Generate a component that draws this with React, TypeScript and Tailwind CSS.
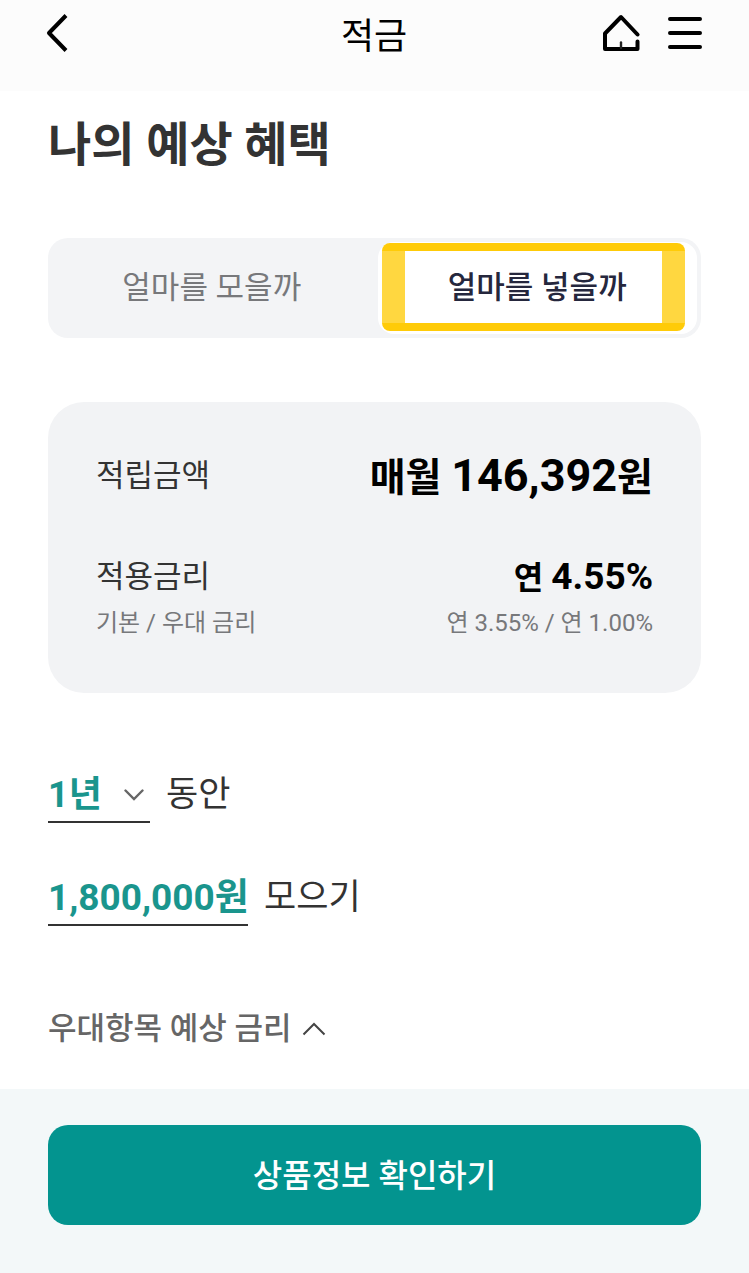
import React, { useState } from 'react';

const TERMS = ['1년', '2년', '3년'];

const BackIcon = () => (
  <svg width="24" height="40" viewBox="0 0 24 40" fill="none" aria-hidden="true">
    <path d="M20 1.5 L3 19 L20 36.5" stroke="#000" strokeWidth="4" strokeLinecap="butt" strokeLinejoin="round" />
  </svg>
);

const HomeIcon = () => (
  <svg width="38" height="38" viewBox="0 0 38 38" fill="none" aria-hidden="true">
    <path
      d="M35.5 20.5 L19 3 L3 19.5 V35 H35.5 V27.5"
      stroke="#000"
      strokeWidth="4"
      strokeLinecap="round"
      strokeLinejoin="round"
    />
    <path d="M19 28.5 V34" stroke="#222" strokeWidth="2.4" strokeLinecap="round" />
  </svg>
);

const MenuIcon = () => (
  <svg width="34" height="34" viewBox="0 0 34 34" fill="none" aria-hidden="true">
    <path d="M2 3 H32 M2 17 H32 M2 31 H32" stroke="#000" strokeWidth="4" strokeLinecap="round" />
  </svg>
);

interface TabProps {
  label: string;
  selected: boolean;
  onClick: () => void;
}

const Tab: React.FC<TabProps> = ({ label, selected, onClick }) => (
  <button
    type="button"
    role="tab"
    aria-selected={selected}
    onClick={onClick}
    className={`relative flex-1 rounded-2xl text-[31px] leading-[44px] ${
      selected ? 'bg-white font-medium text-[#25273d]' : 'text-[#77787b]'
    }`}
  >
    {label}
    {/* Marker frame around the active tab */}
    {selected && (
      <span className="pointer-events-none absolute top-px bottom-[3px] left-1 right-3 flex overflow-hidden rounded-lg border-y-8 border-[#ffcb08]">
        <span className="flex-1 border-x-[23px] border-[#ffd740]" />
      </span>
    )}
  </button>
);

const App: React.FC = () => {
  const [tab, setTab] = useState<'save' | 'deposit'>('deposit');
  const [term, setTerm] = useState(TERMS[0]);
  const [amount, setAmount] = useState('1,800,000원');
  const [open, setOpen] = useState(true);

  return (
    <div className="flex min-h-screen flex-col bg-white font-[Roboto,'Noto_Sans_CJK_KR',sans-serif] text-[#333]">
      <header className="grid h-[91px] grid-cols-[1fr_auto_1fr] items-start bg-[#fcfcfc] pt-[14px] pr-[47px] pl-[46px]">
        <button type="button" aria-label="뒤로" className="justify-self-start">
          <BackIcon />
        </button>
        <h1 className="text-[36px] leading-[46px] text-black">적금</h1>
        <div className="flex items-center gap-7 justify-self-end">
          <button type="button" aria-label="홈">
            <HomeIcon />
          </button>
          <button type="button" aria-label="메뉴">
            <MenuIcon />
          </button>
        </div>
      </header>

      <main className="flex-1 px-12 pt-6 pb-9">
        <h2 className="text-[47px] font-bold leading-[60px]">나의 예상 혜택</h2>

        <div role="tablist" className="mt-[63px] flex h-[100px] gap-[6px] rounded-[20px] bg-[#f3f4f6] p-1">
          <Tab label="얼마를 모을까" selected={tab === 'save'} onClick={() => setTab('save')} />
          <Tab label="얼마를 넣을까" selected={tab === 'deposit'} onClick={() => setTab('deposit')} />
        </div>

        <section className="mt-16 rounded-[36px] bg-[#f2f3f5] px-12 pt-[50px] pb-12">
          <div className="flex h-12 items-center justify-between text-[31px]">
            <span>적립금액</span>
            <strong className="text-[39px] font-bold text-black">
              매월 <span className="text-[45px]">146,392</span>원
            </strong>
          </div>
          <div className="mt-[53px] flex h-12 items-center justify-between text-[31px]">
            <span>적용금리</span>
            <strong className="text-[32px] font-bold text-black">
              연 <span className="text-[37px]">4.55%</span>
            </strong>
          </div>
          <div className="flex h-11 items-center justify-between text-[24px] text-[#77787b]">
            <span>기본 / 우대 금리</span>
            <span>연 3.55% / 연 1.00%</span>
          </div>
        </section>

        <div className="mt-[71px] flex items-center gap-4 text-[35px]">
          <div className="relative h-[59px] w-[102px] border-b-2 border-[#333]">
            <select
              aria-label="기간"
              value={term}
              onChange={(e) => setTerm(e.target.value)}
              className="h-full w-full appearance-none pt-1 text-[36px] font-bold text-[#1a958d] outline-none"
            >
              {TERMS.map((t) => (
                <option key={t}>{t}</option>
              ))}
            </select>
            <svg
              className="pointer-events-none absolute right-[6px] top-[25px]"
              width="20"
              height="12"
              viewBox="0 0 20 12"
              fill="none"
              aria-hidden="true"
            >
              <path d="M1.5 1.5 L10 10 L18.5 1.5" stroke="#666" strokeWidth="2.4" strokeLinecap="round" />
            </svg>
          </div>
          <span className="pt-1">동안</span>
        </div>

        <div className="mt-11 flex items-center gap-4 text-[35px]">
          <input
            type="text"
            aria-label="목표 금액"
            value={amount}
            onChange={(e) => setAmount(e.target.value)}
            className="h-[59px] w-[200px] border-b-2 border-[#333] pb-1 text-[37px] font-bold text-[#1a958d] outline-none"
          />
          <span className="pt-1">모으기</span>
        </div>

        <button
          type="button"
          aria-expanded={open}
          onClick={() => setOpen(!open)}
          className="mt-[79px] flex h-12 items-center gap-[10px] text-[31px] font-medium text-[#666]"
        >
          우대항목 예상 금리
          <svg className={open ? '' : 'rotate-180'} width="24" height="14" viewBox="0 0 24 14" fill="none" aria-hidden="true">
            <path d="M1.5 12.5 L12 2 L22.5 12.5" stroke="#444" strokeWidth="2" />
          </svg>
        </button>
      </main>

      <footer className="bg-[#f3f8f9] px-12 pt-9 pb-12">
        <button
          type="button"
          className="h-[100px] w-full rounded-[20px] bg-[#03948f] pt-[2px] text-[32px] font-medium text-white"
        >
          상품정보 확인하기
        </button>
      </footer>
    </div>
  );
};

export default App;
